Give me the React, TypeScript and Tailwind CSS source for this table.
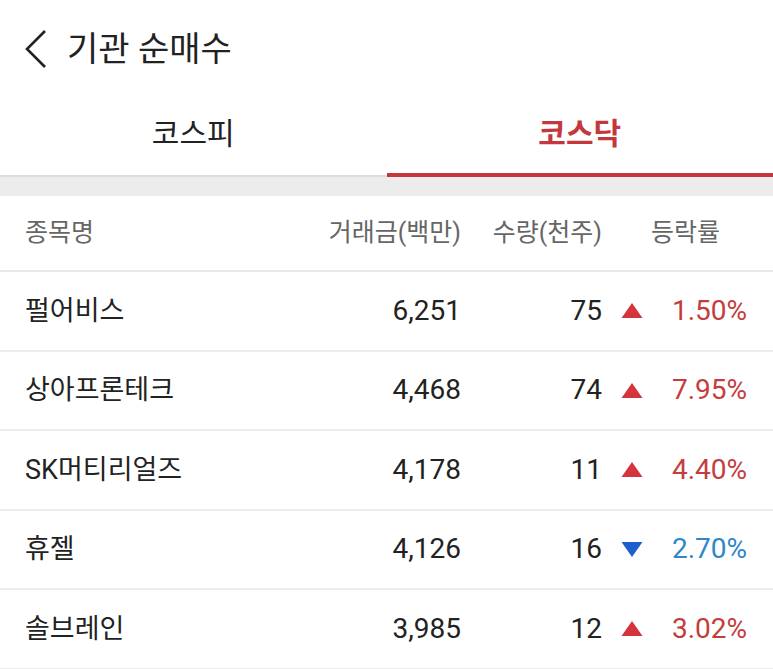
import React from "react";

type Row = { name: string; amt: string; qty: string; up: boolean; pct: string };

const rows: Row[] = [
  { name: "펄어비스", amt: "6,251", qty: "75", up: true, pct: "1.50%" },
  { name: "상아프론테크", amt: "4,468", qty: "74", up: true, pct: "7.95%" },
  { name: "SK머티리얼즈", amt: "4,178", qty: "11", up: true, pct: "4.40%" },
  { name: "휴젤", amt: "4,126", qty: "16", up: false, pct: "2.70%" },
  { name: "솔브레인", amt: "3,985", qty: "12", up: true, pct: "3.02%" },
];

function Tri({ up }: { up: boolean }) {
  return (
    <svg width="22" height="17" viewBox="0 0 22 17">
      {up ? (
        <polygon points="11,1 21.5,16 0.5,16" fill="#d4343c" />
      ) : (
        <polygon points="0.5,1 21.5,1 11,16" fill="#1e5fcf" />
      )}
    </svg>
  );
}

export default function App() {
  return (
    <div
      className="w-[773px] h-[669px] bg-white overflow-hidden text-[#222]"
      style={{ fontFamily: "Roboto, 'Noto Sans CJK KR', sans-serif" }}
    >
      <div className="h-[97px] flex items-center pl-[24px]">
        <svg width="24" height="40" viewBox="0 0 24 40" className="mr-[19px]">
          <polyline points="21,2 3,20 21,38" fill="none" stroke="#222" strokeWidth="2.6" />
        </svg>
        <span className="text-[34px] leading-none text-[#222]">기관 순매수</span>
      </div>
      <div className="flex h-[80px]">
        <div className="flex-1 flex items-center justify-center border-b-[2px] border-[#dcdcdc] text-[30px] text-[#222] pb-[6px]">
          코스피
        </div>
        <div className="flex-1 flex items-center justify-center border-b-[4px] border-[#c4373c] text-[30px] font-bold text-[#c4373c] pb-[4px]">
          코스닥
        </div>
      </div>
      <div className="h-[19px] bg-[#ececec]" />
      <div className="flex items-center h-[76px] border-b-[2px] border-[#e8e8e8] text-[25px] text-[#666]">
        <div className="w-[300px] pl-[25px]">종목명</div>
        <div className="w-[161px] text-right">거래금(백만)</div>
        <div className="w-[141px] text-right">수량(천주)</div>
        <div className="flex-1 text-center pr-[4px]">등락률</div>
      </div>
      {rows.map((r) => (
        <div
          key={r.name}
          className="flex items-center h-[79.5px] border-b-[2px] border-[#ececec] text-[27px]"
        >
          <div className="w-[300px] pl-[25px] text-[#222]">{r.name}</div>
          <div className="w-[161px] text-right text-[#222] text-[28px]">{r.amt}</div>
          <div className="w-[141px] text-right text-[#222] text-[28px]">{r.qty}</div>
          <div className="w-[30px] ml-[19px] flex items-center">
            <Tri up={r.up} />
          </div>
          <div
            className={`w-[96px] text-right text-[28px] ${r.up ? "text-[#c43d3d]" : "text-[#2f86c9]"}`}
          >
            {r.pct}
          </div>
        </div>
      ))}
    </div>
  );
}
